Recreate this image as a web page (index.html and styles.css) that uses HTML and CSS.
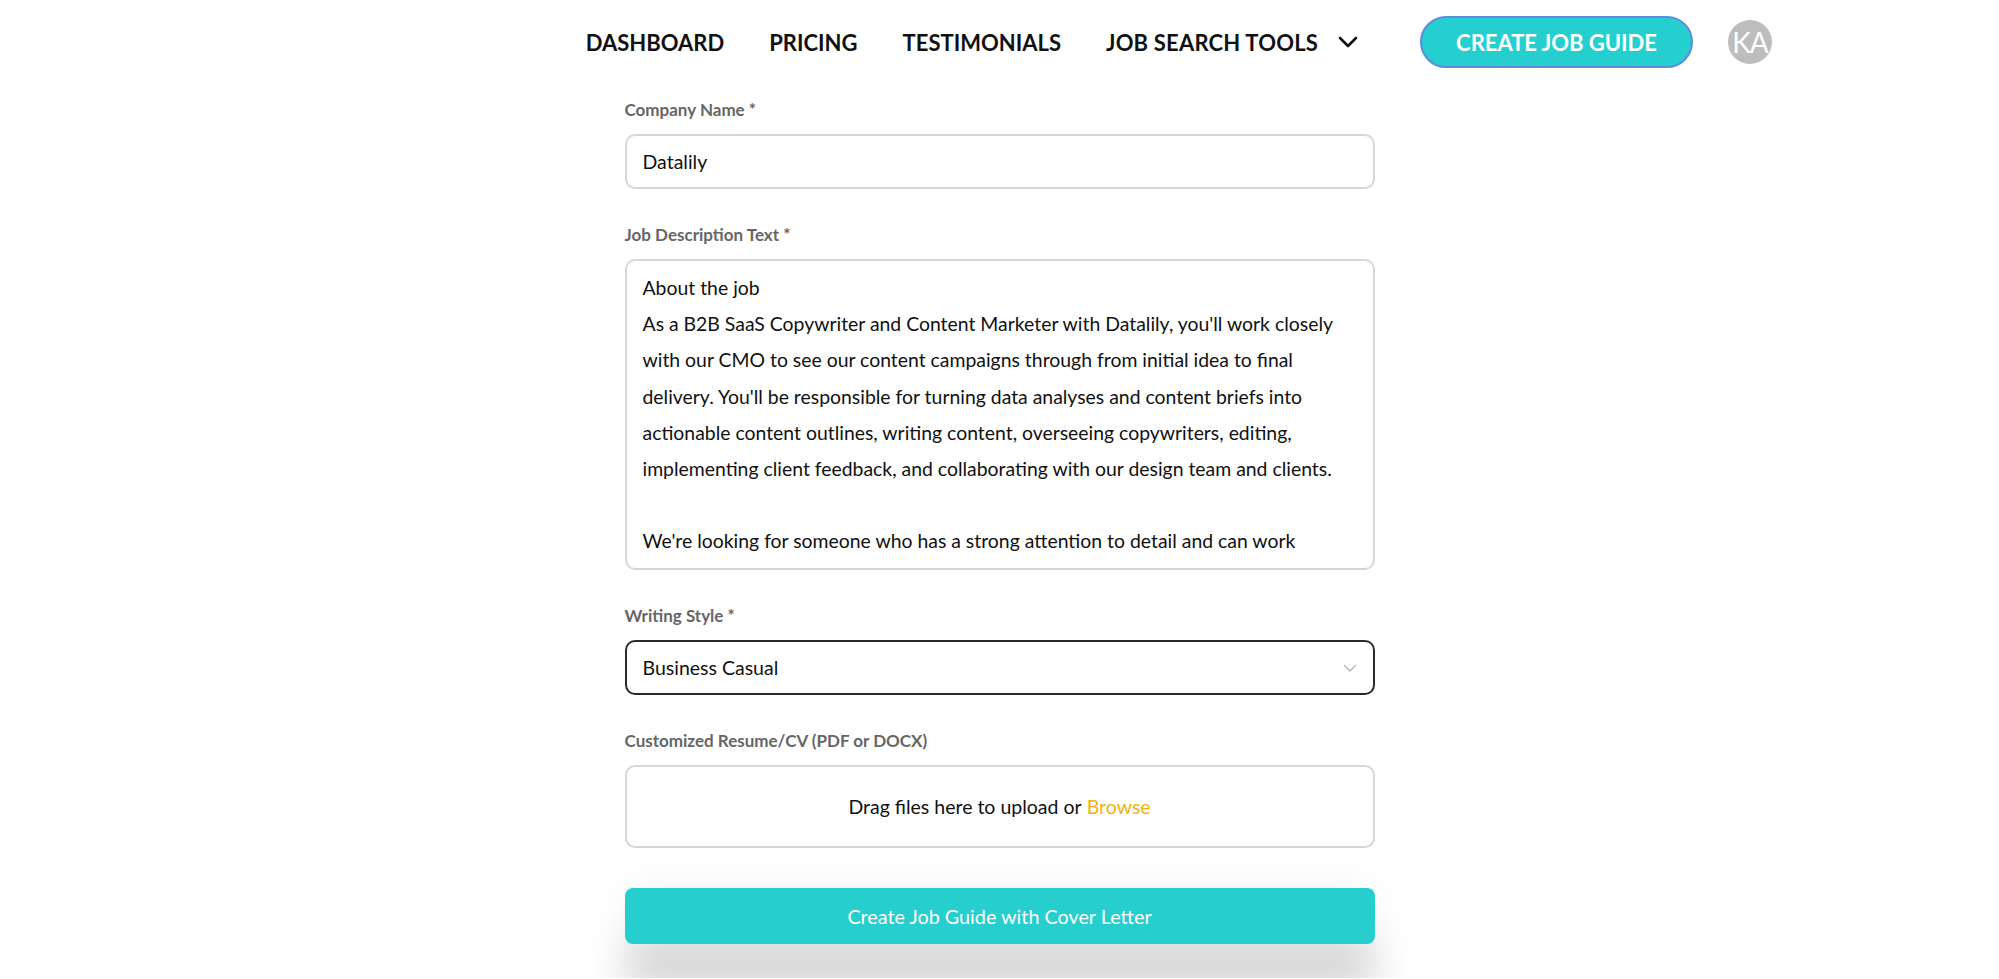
FILE: index.html
```html
<!DOCTYPE html>
<html lang="en">
<head>
    <meta charset="UTF-8">
    <meta name="viewport" content="width=device-width, initial-scale=1.0">
    <title>Create Job Guide</title>
    <link rel="stylesheet" href="styles.css">
</head>
<body>
    <header class="topbar">
        <nav class="nav">
            <a href="#" class="nav-link">DASHBOARD</a>
            <a href="#" class="nav-link">PRICING</a>
            <a href="#" class="nav-link">TESTIMONIALS</a>
            <a href="#" class="nav-link nav-dropdown">JOB SEARCH TOOLS
                <svg class="nav-chevron" width="20" height="12" viewBox="0 0 20 12">
                    <polyline points="2,2 10,10 18,2" fill="none" stroke="#111" stroke-width="2.6" stroke-linecap="round" stroke-linejoin="round"/>
                </svg>
            </a>
        </nav>
        <a href="#" class="cta">CREATE JOB GUIDE</a>
        <div class="avatar">KA</div>
    </header>

    <form class="guide-form">
        <div class="field">
            <label class="field-label">Company Name *</label>
            <div class="input">Datalily</div>
        </div>

        <div class="field">
            <label class="field-label">Job Description Text *</label>
            <div class="textarea">
                <div class="line">About the job</div>
                <div class="line">As a B2B SaaS Copywriter and Content Marketer with Datalily, you'll work closely</div>
                <div class="line">with our CMO to see our content campaigns through from initial idea to final</div>
                <div class="line">delivery. You'll be responsible for turning data analyses and content briefs into</div>
                <div class="line">actionable content outlines, writing content, overseeing copywriters, editing,</div>
                <div class="line">implementing client feedback, and collaborating with our design team and clients.</div>
                <div class="line">&nbsp;</div>
                <div class="line">We're looking for someone who has a strong attention to detail and can work</div>
            </div>
        </div>

        <div class="field">
            <label class="field-label">Writing Style *</label>
            <div class="input select">
                <span>Business Casual</span>
                <svg width="14" height="8" viewBox="0 0 14 8">
                    <polyline points="1,1 7,7 13,1" fill="none" stroke="#b5b5b5" stroke-width="1.3"/>
                </svg>
            </div>
        </div>

        <div class="field field-last">
            <label class="field-label">Customized Resume/CV (PDF or DOCX)</label>
            <div class="dropzone">Drag files here to upload or <span class="browse">Browse</span></div>
        </div>

        <button type="button" class="submit">Create Job Guide with Cover Letter</button>
    </form>
</body>
</html>
```

FILE: styles.css
```css
* {
    box-sizing: border-box;
}
html {
    overflow: hidden;
}
body {
    margin: 0;
    font-family: Lato, "Noto Sans", sans-serif;
    color: #111;
    background-color: #fff;
}
.topbar {
    height: 84px;
    display: flex;
    align-items: center;
    justify-content: flex-end;
    padding-right: 227px;
}
.nav {
    display: flex;
    align-items: center;
    gap: 45px;
}
.nav-link {
    font-size: 22px;
    font-weight: 700;
    color: #111;
    text-decoration: none;
    display: flex;
    align-items: center;
}
.nav-dropdown {
    letter-spacing: 0.2px;
}
.nav-chevron {
    margin-left: 20px;
}
.cta {
    margin-left: 62px;
    height: 52px;
    padding: 0 34px;
    display: flex;
    align-items: center;
    background-color: #26cfcf;
    border: 2px solid #5b8ddb;
    border-radius: 28px;
    color: #fff;
    font-size: 22px;
    font-weight: 700;
    text-decoration: none;
}
.avatar {
    margin-left: 35px;
    width: 44px;
    height: 44px;
    border-radius: 50%;
    background-color: #bdbdbd;
    color: #fff;
    font-size: 28px;
    display: flex;
    align-items: center;
    justify-content: center;
    letter-spacing: -1px;
    overflow: hidden;
}
.guide-form {
    width: 750px;
    margin: 16px auto 0;
    padding-bottom: 34px;
}
.field {
    margin-bottom: 36px;
}
.field-last {
    margin-bottom: 40px;
}
.field-label {
    display: block;
    height: 20px;
    line-height: 20px;
    margin-bottom: 14px;
    font-size: 17px;
    font-weight: 700;
    color: #666;
}
.input {
    height: 55px;
    padding: 0 16px;
    display: flex;
    align-items: center;
    border: 2px solid #d6d6d6;
    border-radius: 10px;
    font-size: 19.5px;
}
.select {
    justify-content: space-between;
    border-color: #2a2a2a;
}
.textarea {
    height: 311px;
    padding: 9px 16px 0;
    border: 2px solid #d6d6d6;
    border-radius: 10px;
    font-size: 19.4px;
    line-height: 36.2px;
    overflow: hidden;
}
.line {
    white-space: nowrap;
}
.dropzone {
    height: 83px;
    display: flex;
    align-items: center;
    justify-content: center;
    border: 2px solid #d6d6d6;
    border-radius: 10px;
    font-size: 19.5px;
}
.browse {
    color: #f0b311;
    margin-left: 5px;
}
.submit {
    width: 100%;
    height: 56px;
    border: none;
    border-radius: 8px;
    background-color: #27cece;
    color: #fff;
    font-family: Lato, "Noto Sans", sans-serif;
    font-size: 19.8px;
    box-shadow: 0 50px 40px 0 rgba(0, 0, 0, 0.16), 0 0 40px rgba(0, 0, 0, 0.05);
    cursor: pointer;
}
```
